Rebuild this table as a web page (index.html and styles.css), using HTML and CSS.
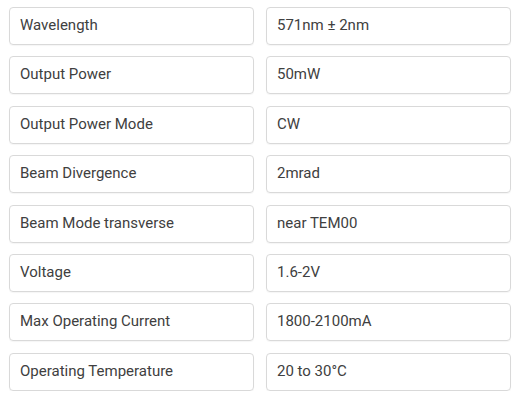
FILE: index.html
```html
<!DOCTYPE html>
<html>
<head>
<meta charset="utf-8">
<link rel="stylesheet" href="styles.css">
</head>
<body>
<div class="specs">
  <div class="cell">Wavelength</div><div class="cell">571nm ± 2nm</div>
  <div class="cell">Output Power</div><div class="cell">50mW</div>
  <div class="cell">Output Power Mode</div><div class="cell">CW</div>
  <div class="cell">Beam Divergence</div><div class="cell">2mrad</div>
  <div class="cell">Beam Mode transverse</div><div class="cell">near TEM00</div>
  <div class="cell">Voltage</div><div class="cell">1.6-2V</div>
  <div class="cell">Max Operating Current</div><div class="cell">1800-2100mA</div>
  <div class="cell">Operating Temperature</div><div class="cell">20 to 30°C</div>
</div>
</body>
</html>
```
FILE: styles.css
```css
html, body {
  margin: 0;
  background: #fff;
}
body {
  padding: 7px 0 0 9px;
  font-family: Roboto, "Liberation Sans", sans-serif;
}
.specs {
  display: grid;
  grid-template-columns: 245px 245px;
  column-gap: 12px;
  row-gap: 11.4px;
}
.cell {
  box-sizing: border-box;
  height: 38px;
  border: 1px solid #d9d9d9;
  border-radius: 4px;
  padding: 0 10px 2px;
  display: flex;
  align-items: center;
  font-size: 15px;
  color: #404040;
  box-shadow: 0 1px 1px rgba(0,0,0,0.04);
}
```
